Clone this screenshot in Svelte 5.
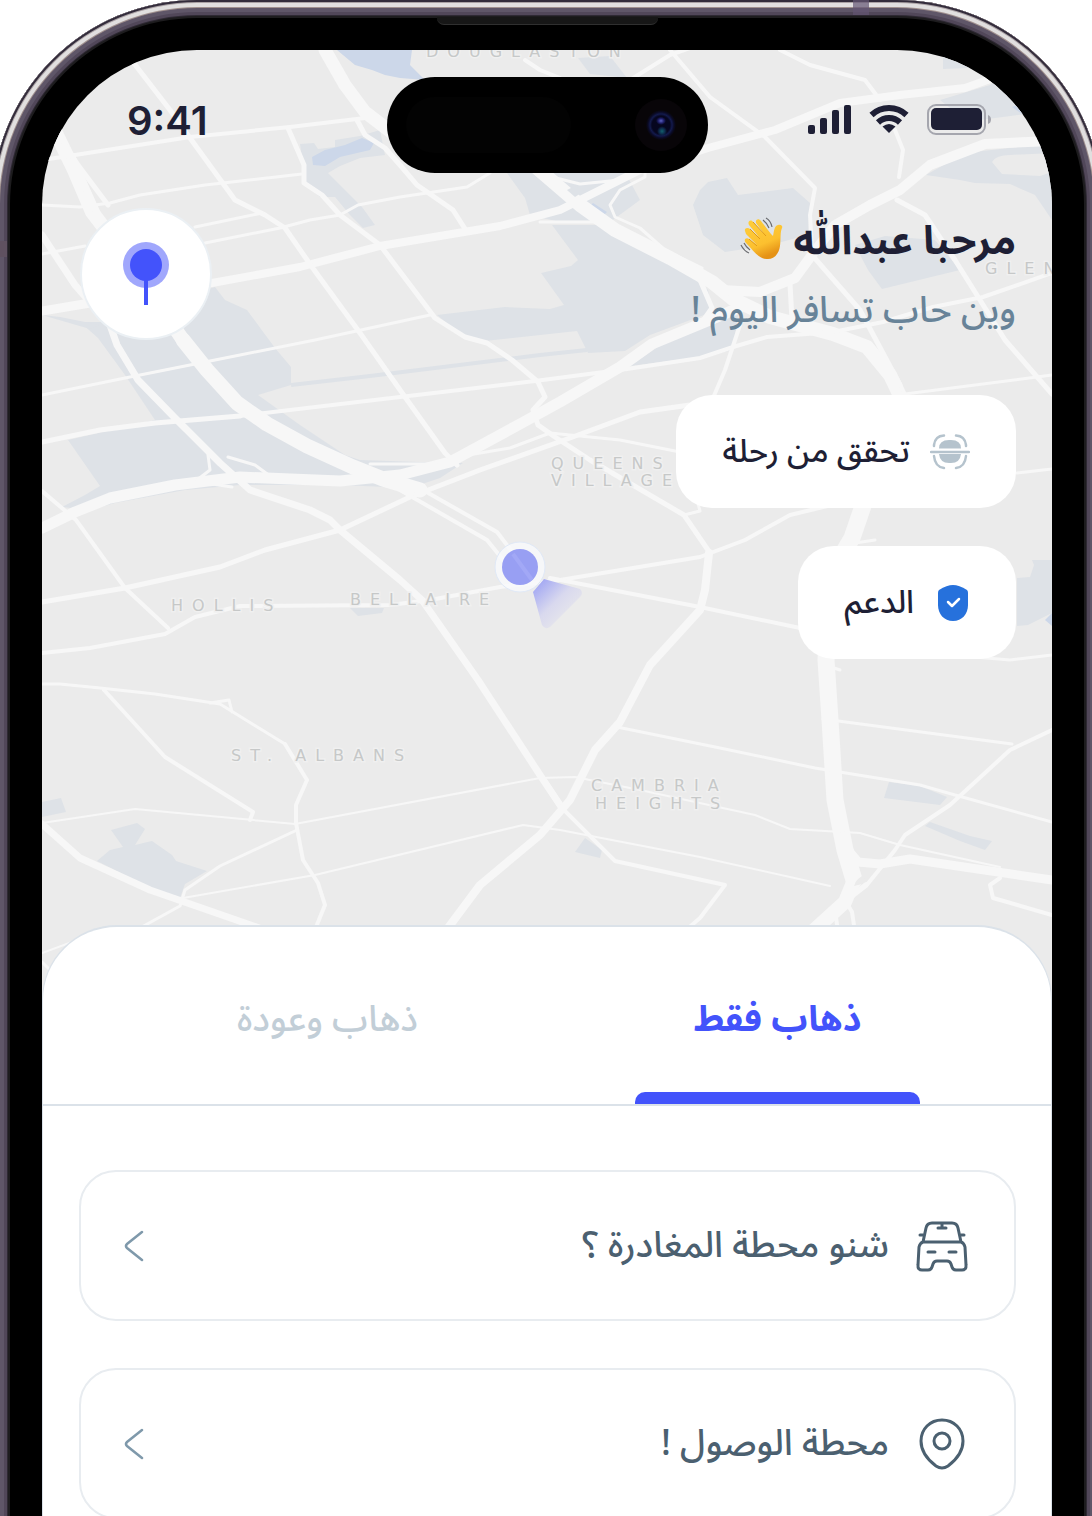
<script>
  const parks = [
    'M80 322 100 322 205 290 215 287 225 300 247 310 275 348 291 367 291 385 258 395 300 425 345 455 360 460 420 462 463 463 440 478 410 488 340 485 240 485 185 490 115 503 90 510 62 507 85 495 100 486 68 440 155 420 125 375 98 338Z',
    'M42 315 60 317 100 325 90 329Z',
    'M552 225 578 260 571 266 541 273 564 305 550 309 505 307 437 315 465 338 485 341 577 331 588 353 625 351 650 335 712 312 708 290 690 275 600 225Z',
    'M630 366 665 342 738 315 733 350 700 357Z',
    'M507 173 525 198 530 215 560 222 610 222 640 200 625 172Z',
    'M693 205 700 190 708 182 727 178 738 195 793 188 810 203 808 235 770 245 725 252 703 235Z',
    'M855 245 885 236 935 240 960 270 882 289 868 270Z',
    'M926 175 965 153 1052 143 1052 220 1035 195 1010 184 975 183 960 180Z',
    'M943 55 975 62 968 68 943 69Z',
    'M940 100 990 85 1000 78 1033 113 980 120 950 108Z',
    'M300 144 314 143 318 149 335 147 335 140 360 136 380 130 385 155 360 158 340 166 328 173 350 195 362 207 375 225 363 228 350 215 335 197 320 197 306 185Z',
    'M97 861 110 850 123 847 111 830 137 823 145 829 135 845 152 841 172 855 176 861 207 871 185 884 180 898 150 888Z',
    'M42 802 61 798 66 812 42 817Z',
    'M889 782 920 786 947 797 940 805 884 798Z',
    'M930 822 970 836 992 841 985 850 960 841 925 826Z',
    'M585 838 602 850 600 858 575 852Z',
    'M1017 578 1030 577 1034 565 1032 560 1052 560 1052 613 1028 625 1017 626Z',
    'M350 608 384 608 382 613 358 616Z',
    'M578 58 610 56 627 78 590 74Z',
  ];

  const water = [
    'M337 50 412 50 410 65 425 80 400 78 385 75 372 70 355 65Z',
    'M312 157 325 150 345 145 362 138 374 143 370 150 340 157 325 166 313 165Z',
    'M593 203 607 212 602 217 588 208Z',
    'M1012 107 1020 104 1032 112 1022 114Z',
    'M1045 620 1052 613 1052 626Z',
  ];

  const land = ['M992 162Q996 155 1010 155L1052 153 1052 172 1040 176 1002 174Z'];

  const roads = [
    { w: 14, d: 'M53 127 74 170 92 212 115 242 150 292 183 340' },
    { w: 7, d: 'M56 133 80 175 98 215' },
    { w: 15, d: 'M183 340 207 370 237 403 267 424 307 446 353 467 383 479 420 490' },
    { w: 7, d: 'M42 235 75 285 110 325 117 345 138 380 175 418 220 463 250 490 310 510 330 520 340 530 400 580 422 600 478 680 540 775 562 808' },
    { w: 4, d: 'M562 808 615 861 725 885 700 918 686 930' },
    { w: 11, d: 'M42 528 75 512 110 498 175 485 240 477 340 481 400 475 450 462 520 424 560 402 620 367 652 344 710 320 745 305' },
    { w: 14, d: 'M530 162 580 205 615 230 670 258 712 282 733 299 770 317 833 334 867 347 890 375 902 400' },
    { w: 17, d: 'M902 400 865 500 852 538 830 575 826 660 830 720 835 800 845 850 854 880' },
    { w: 14, d: 'M854 880 845 902 812 932' },
    { w: 10, d: 'M1052 141 985 144 930 165 900 190 870 205 835 225 814 252 795 278 760 292 720 290' },
    { w: 8, d: 'M1010 72 965 88 900 95 840 103 775 130 708 148 640 170 600 190 560 210 500 226 380 246 300 267 212 283' },
    { w: 9, d: 'M90 303 42 311' },
    { w: 13, d: 'M325 50 345 85 365 112 395 135' },
    { w: 5, d: 'M357 120 365 135 385 148 400 165 417 185 453 210 467 232' },
    { w: 4, d: 'M42 160 75 155 190 137 290 127 365 118' },
    { w: 5, d: 'M133 62 170 110 190 138 235 200 265 215 285 228 312 267 360 333 405 397 445 453 457 465' },
    { w: 5, d: 'M288 128 304 165 304 183 322 195 340 215 380 245 435 318 465 337 487 343 512 360 538 382 545 397 533 410 538 425 555 437 590 460 684 515 710 553' },
    { w: 8, d: 'M709 553 705 590 700 610 650 665 620 722 595 750 570 800 540 835 480 885 445 932' },
    { w: 3, d: 'M42 205 80 207 110 203 140 195 205 185 302 174' },
    { w: 5, d: 'M62 140 78 165 108 205' },
    { w: 3, d: 'M42 254 85 246M195 227 262 213M205 243 280 228 310 220 340 215 358 205 400 197 467 187 490 173' },
    { w: 3, d: 'M42 395 130 377 240 355 315 340 430 315' },
    { w: 5, d: 'M42 442 100 430 155 423 240 416' },
    { w: 4, d: 'M240 416 400 397 535 381 627 369 700 358 733 347 767 337 833 332 883 322 933 307 983 297 1052 273' },
    { w: 4, d: 'M740 325 725 370 713 398' },
    { w: 4, d: 'M42 491 76 520 125 588 168 628' },
    { w: 5, d: 'M42 602 125 588 220 567 265 550 340 530 410 497 480 470 570 438 640 412 690 405' },
    { w: 4, d: 'M42 653 90 648 165 634 195 617 240 606 390 605 430 600 500 587 560 580 700 557 745 540 790 515 840 503' },
    { w: 3, d: 'M450 458 510 448 550 433 620 440 680 452' },
    { w: 4, d: 'M400 490 487 540 508 566M423 490 497 532 520 562' },
    { w: 4, d: 'M550 578 700 607 800 628' },
    { w: 4, d: 'M285 744 307 780 296 805 296 823 303 860 318 883 325 905 314 932' },
    { w: 3, d: 'M42 684 60 684 100 688 155 694 220 704 285 744M210 703 229 700 232 712' },
    { w: 4, d: 'M104 690 165 757 253 812 250 820' },
    { w: 2, d: 'M42 823 135 809 295 824 540 778 575 777 640 790 755 815 790 829 860 833 900 845 1000 867' },
    { w: 7, d: 'M42 824 80 858 150 890 265 930' },
    { w: 3, d: 'M140 928 180 906 185 890 220 866 297 830' },
    { w: 2, d: 'M183 898 315 875 523 825 560 830 700 857 830 886M42 953 72 942' },
    { w: 3, d: 'M42 962 52 972M617 727 720 748 815 768 920 785 955 795 1052 822M823 719 1012 744' },
    { w: 4, d: 'M1052 730 1010 750 950 805 905 835 895 850 866 886 835 910 838 932' },
    { w: 4, d: 'M866 884 836 906M845 900 852 912 855 932' },
    { w: 9, d: 'M848 850 858 862 880 864 910 859 1052 880' },
    { w: 4, d: 'M1052 915 993 898 990 885 1000 878' },
    { w: 4, d: 'M780 50 810 65 865 80 880 100M895 130 903 150 899 177' },
    { w: 4, d: 'M670 50 710 97 765 137 815 188 810 215 812 250' },
    { w: 5, d: 'M812 255 860 310 900 385' },
    { w: 5, d: 'M897 200 925 215 955 260 1005 340 1052 394' },
    { w: 3, d: 'M905 394 1052 375M1017 473 1052 469M975 657 1010 660 1052 655' },
    { w: 3, d: 'M540 174 580 184 620 180 645 170 645 177 620 190 610 205 615 217 640 228 665 250 702 268M540 222 600 222' },
    { w: 4, d: 'M630 80 670 55 690 48M525 60 540 70 560 78' },
    { w: 3, d: 'M684 515 700 511 697 500M208 455 210 470 197 480M228 457 255 465 270 476M205 478 212 484 232 487M370 464 430 464 455 458' },
    { w: 5, d: 'M700 280 712 308 700 325M790 284 792 320' },
    { w: 3, d: 'M855 543 875 540M822 664 840 670M824 684 833 680' },
  ];

  const labels = [
    { x: 426, y: 57, t: 'DOUGLASTON' },
    { x: 985, y: 274, t: 'GLEN' },
    { x: 551, y: 469, t: 'QUEENS' },
    { x: 551, y: 486, t: 'VILLAGE' },
    { x: 171, y: 611, t: 'HOLLIS' },
    { x: 350, y: 605, t: 'BELLAIRE' },
    { x: 231, y: 761, t: 'ST. ALBANS' },
    { x: 591, y: 791, t: 'CAMBRIA' },
    { x: 595, y: 809, t: 'HEIGHTS' },
  ];

  let active = $state('one');
</script>

<div class="device">
  <span class="band band-top"></span>
  <span class="band band-side"></span>
  <span class="speaker"></span>

  <main class="screen" dir="rtl">
    <svg class="map" viewBox="42 50 1010 950" preserveAspectRatio="xMidYMin slice" aria-hidden="true">
      <defs>
        <linearGradient id="beam" x1="536" y1="585" x2="566" y2="616" gradientUnits="userSpaceOnUse">
          <stop offset="0" stop-color="#a3a8f3" />
          <stop offset="0.6" stop-color="#d9d9ee" />
          <stop offset="1" stop-color="#e4e4ec" />
        </linearGradient>
      </defs>
      {#each parks as d}<path {d} fill="#dee2e7" />{/each}
      {#each land as d}<path {d} fill="#ebebeb" />{/each}
      {#each water as d}<path {d} fill="#ccd7e9" />{/each}
      <path d="M291 385 370 376 540 355 587 350" fill="none" stroke="#dee2e7" stroke-width="4" />
      {#each roads as r}
        <path d={r.d} fill="none" stroke="#f7f7f7" stroke-width={r.w} stroke-linejoin="round" stroke-linecap="round" />
      {/each}
      <path d="M567 190 575 186 584 191 575 197Z" fill="#dee2e7" />
      <path d="M854 886Q856 878 866 874L862 884Z" fill="#ebebeb" />
      {#each labels as l}<text class="place" x={l.x} y={l.y}>{l.t}</text>{/each}
      <path d="M544 579 580 589Q584 593 580 597L550 627Q545 630 542 625L533 592Z" fill="url(#beam)" />
      <circle cx="520" cy="567" r="25" fill="#f8f9fb" fill-opacity="0.85" stroke="#e0e9f7" stroke-width="1" />
      <circle cx="520" cy="567" r="18" fill="#989ff3" />
      <path d="M513 554 532 580" stroke="#a2a8f6" stroke-width="4" />
    </svg>

    <div class="status" dir="ltr">
      <time>9:41</time>
      <div class="indicators">
        <svg width="43" height="30" viewBox="0 0 43 30" fill="#1e1f35" aria-hidden="true">
          <rect x="0" y="20" width="7" height="9" rx="2" />
          <rect x="12" y="13" width="7" height="16" rx="2" />
          <rect x="24" y="5" width="7" height="24" rx="2" />
          <rect x="36" y="0" width="7" height="29" rx="2" />
        </svg>
        <svg width="40" height="29" viewBox="0 0 40 29" aria-hidden="true">
          <path d="M2.500 10A25.500 25.500 0 0 1 37.500 10" fill="none" stroke="#1e1f35" stroke-width="6" />
          <path d="M9 17.500A16 16 0 0 1 31 17.500" fill="none" stroke="#1e1f35" stroke-width="6" />
          <path d="M20 28 13.500 21.500Q20 16.500 26.500 21.500Z" fill="#1e1f35" />
        </svg>
        <svg width="65" height="31" viewBox="0 0 65 31" aria-hidden="true">
          <rect x="1" y="1" width="57" height="29" rx="8" fill="none" stroke="#a5a6ae" stroke-width="2" />
          <rect x="4" y="4" width="51" height="22" rx="5" fill="#1e1f35" />
          <path d="M61 11Q64 12 64 15.500T61 20Z" fill="#a5a6ae" />
        </svg>
      </div>
    </div>

    <section class="hero">
      <div class="intro">
        <div class="greeting">
          <h1>
            مرحبا عبداللّٰه
            <svg width="45" height="44" viewBox="0 0 45 44" role="img" aria-label="👋">
              <defs>
                <linearGradient id="skin" x1="0" y1="0" x2="0.4" y2="1">
                  <stop offset="0" stop-color="#ffcf3d" />
                  <stop offset="0.7" stop-color="#fcc02f" />
                  <stop offset="1" stop-color="#e59216" />
                </linearGradient>
              </defs>
              <path d="M5 14C4 11 8 10 10 12L19 20 9 8C7 4 11 2 13 5L24 17 16 6C15 2 19 1 21 4L31 17 33 19C34 15 34 9 38 8 41 7 43 9 42 11 40 15 41 22 40 29 39 37 34 42 28 42 21 43 16 37 6 26 3 23 6 20 9 22L17 28 6 17Z" fill="url(#skin)" />
              <path d="M10 12 20 22M13 5 26 19M9 22 17 29" fill="none" stroke="#e09a1c" stroke-width="1" />
              <path d="M26 1Q31 4 32 10M23 3Q27 6 29 11M1 28Q4 34 9 36M4 26Q6 30 10 33" fill="none" stroke="#6b6c70" stroke-width="1.200" />
            </svg>
          </h1>
          <p>وين حاب تسافر اليوم !</p>
        </div>
        <button class="locate" aria-label="الموقع">
          <svg width="46" height="64" viewBox="0 0 46 64" aria-hidden="true">
            <circle cx="23" cy="23" r="23" fill="#a0a7fc" />
            <circle cx="23" cy="23" r="16" fill="#4353fb" />
            <path d="M23 30V63" stroke="#4353fb" stroke-width="4" />
          </svg>
        </button>
      </div>

      <button class="chip">
        <svg width="40" height="36" viewBox="0 0 40 36" aria-hidden="true">
          <path d="M4 12V11Q5 2 14 1.500M26 1.500Q35 2 36 11V12M4 22Q5 33 14 34M26 34Q35 33 36 22" fill="none" stroke="#b5c3cd" stroke-width="2.500" stroke-linecap="round" />
          <path d="M9 14.500Q9 6 19 6H21Q31 6 31 14.500Z" fill="#b5c3cd" />
          <path d="M9 20Q10 29 19 29H21Q30 29 31 20Z" fill="#b5c3cd" />
          <path d="M1 18H39" stroke="#b5c3cd" stroke-width="2.500" stroke-linecap="round" />
        </svg>
        <span>تحقق من رحلة</span>
      </button>
      <button class="chip">
        <svg class="shield" width="30" height="36" viewBox="0 0 30 36" aria-hidden="true">
          <path d="M15 0Q21 0 29 5Q30 6 30 8V20C30 29 24 36 15 36S0 29 0 20V8Q0 6 1 5Q9 0 15 0Z" fill="#2671dc" />
          <path d="M10 17 14 21 21 14" fill="none" stroke="#fff" stroke-width="2.500" stroke-linecap="round" stroke-linejoin="round" />
        </svg>
        <span>الدعم</span>
      </button>
    </section>

    <section class="sheet">
      <div class="tabs" role="tablist">
        <button role="tab" aria-selected={active === 'one'} class:active={active === 'one'} onclick={() => (active = 'one')}>ذهاب فقط</button>
        <button role="tab" aria-selected={active === 'two'} class:active={active === 'two'} onclick={() => (active = 'two')}>ذهاب وعودة</button>
      </div>
      <div class="cards">
        <button class="card">
          <svg width="52" height="52" viewBox="0 0 52 52" fill="none" stroke="#4b6070" stroke-width="3" stroke-linecap="round" stroke-linejoin="round" aria-hidden="true">
            <path d="M7 22 10 8Q11 3 16 3H36Q41 3 42 8L45 22ZM7 22Q4 23 3 27L2 45Q1.500 50 6 50H12Q15 50 16 47L17 44Q18 41 21 41H31Q34 41 35 44L36 47Q37 50 40 50H46Q50.500 50 50 45L49 27Q48 23 45 22" />
            <path d="M22 8H30M26 4V8M4 15H7M45 15H48M12 32H19M33 32H40" />
          </svg>
          <span>شنو محطة المغادرة ؟</span>
          <svg class="chevron" width="20" height="34" viewBox="0 0 20 34" aria-hidden="true"><path d="M18 3 3 15Q1 17 3 19L18 31" /></svg>
        </button>
        <button class="card">
          <svg width="52" height="52" viewBox="0 0 52 52" fill="none" stroke="#4b6070" stroke-width="3" aria-hidden="true">
            <path d="M26 2C14 2 5 11 5 23 5 34 12 42 20 48Q26 52 32 48C40 42 47 34 47 23 47 11 38 2 26 2Z" />
            <circle cx="26" cy="23" r="8" />
          </svg>
          <span>محطة الوصول !</span>
          <svg class="chevron" width="20" height="34" viewBox="0 0 20 34" aria-hidden="true"><path d="M18 3 3 15Q1 17 3 19L18 31" /></svg>
        </button>
      </div>
    </section>
  </main>

  <div class="island">
    <span class="sensor"></span>
    <span class="camera"></span>
  </div>
</div>

<style>
  :global(body) {
    height: 100vh;
    margin: 0;
    background: #fff;
    overflow: hidden;
  }
  * {
    box-sizing: border-box;
  }
  button {
    border: 0;
    margin: 0;
    padding: 0;
    background: none;
    font: inherit;
    color: inherit;
    cursor: pointer;
  }
  .device {
    position: relative;
    display: flex;
    height: calc(100vh + 20px);
    margin: 0 -10px 0 -8px;
    padding: 50px 50px 0;
    overflow: hidden;
    border-radius: 205px 205px 0 0;
    background: #000;
    box-shadow:
      inset 0 0 0 2px #332c3b,
      inset 0 0 0 3px #aaa2a5,
      inset 0 0 0 7px #e1dfdf,
      inset 0 0 0 8px #a1918f,
      inset 0 0 0 12px #5f5668,
      inset 0 0 0 15px #514759,
      inset 0 0 0 16px #2e2933,
      inset 0 0 0 18px #1d1c1e;
    font-family: "Noto Sans Arabic", "DejaVu Sans", sans-serif;
    font-weight: 500;
  }
  .band {
    position: absolute;
    background: rgb(100 85 115 / 70%);
  }
  .band-top {
    top: 0;
    right: 233px;
    width: 16px;
    height: 15px;
  }
  .band-side {
    top: 241px;
    left: 8px;
    width: 7px;
    height: 16px;
    background: #5f5160;
  }
  .speaker {
    position: absolute;
    top: 17px;
    left: 50%;
    width: 221px;
    height: 8px;
    margin-left: -110px;
    border-bottom: 1px solid #303030;
    border-radius: 0 0 7px 7px;
    background: #171717;
  }
  .island {
    position: absolute;
    top: 77px;
    left: 50%;
    display: flex;
    align-items: center;
    justify-content: space-between;
    width: 321px;
    height: 96px;
    margin-left: -160px;
    padding: 0 21px 0 19px;
    border-radius: 48px;
    background: #000;
  }
  .sensor {
    width: 165px;
    height: 56px;
    border-radius: 28px;
    background: #030303;
  }
  .camera {
    width: 52px;
    height: 52px;
    border-radius: 50%;
    background:
      radial-gradient(5px 4px at 50% 42%, #5b60c0 0, #1d1d66 60%, transparent),
      radial-gradient(5px 5px at 52% 62%, #12606c 0, #0d2a4a 60%, transparent),
      radial-gradient(circle, #06061f 0 9px, #131a4c 11px, #0a0a24 13px, #080508 15px);
  }
  .screen {
    position: relative;
    flex: 1;
    min-width: 0;
    overflow: hidden;
    border-radius: 155px 155px 0 0;
    background: #ebebeb;
    color: #1e1f35;
  }
  .map {
    position: absolute;
    top: 0;
    left: 0;
    width: 100%;
    height: 950px;
  }
  .place {
    direction: ltr;
    fill: #c6c8c8;
    stroke: #f0f0f0;
    stroke-width: 3px;
    paint-order: stroke;
    font-family: "DejaVu Sans", sans-serif;
    font-size: 16px;
    letter-spacing: 9px;
  }
  .status,
  .hero,
  .sheet {
    position: relative;
  }
  .status {
    display: flex;
    align-items: center;
    justify-content: space-between;
    height: 142px;
    padding: 0 60px 0 85px;
  }
  .status time {
    font: 600 40px/48px Inter, sans-serif;
  }
  .indicators {
    display: flex;
    align-items: center;
    gap: 18px;
    padding-bottom: 3px;
  }
  .hero {
    display: flex;
    flex-direction: column;
    align-items: flex-start;
    gap: 38px;
    padding: 16px 36px 266px 38px;
  }
  .intro {
    display: flex;
    justify-content: space-between;
    align-items: flex-start;
    width: 100%;
    height: 149px;
  }
  h1,
  p {
    margin: 0;
    white-space: nowrap;
  }
  h1 {
    display: flex;
    align-items: center;
    gap: 8px;
    font-size: 40px;
    font-weight: 700;
    line-height: 68px;
  }
  h1 svg {
    margin-bottom: 6px;
  }
  p {
    color: #688398;
    font-size: 36px;
    line-height: 70px;
  }
  .locate {
    display: grid;
    place-items: center;
    flex: none;
    width: 132px;
    height: 132px;
    border: 2px solid #ebf0f4;
    border-radius: 50%;
    background: #fff;
  }
  .chip {
    display: flex;
    align-items: center;
    gap: 20px;
    height: 113px;
    padding: 0 46px;
    border-radius: 36px;
    background: #fff;
    font-size: 32px;
    white-space: nowrap;
  }
  .chip .shield {
    margin: 0 2px 0 4px;
  }
  .sheet {
    min-height: 620px;
    border: 2px solid #dbe2e9;
    border-width: 2px 1px 0;
    border-radius: 75px 75px 0 0;
    background: #fff;
  }
  .tabs {
    display: flex;
    justify-content: space-between;
    height: 179px;
    padding: 0 131px 0 142px;
    border-bottom: 2px solid #dbe2e9;
  }
  .tabs button {
    position: relative;
    width: 285px;
    padding-top: 8px;
    color: #c2ced7;
    font-size: 36px;
  }
  .tabs .active {
    color: #4353fb;
    font-weight: 700;
  }
  .tabs .active::after {
    content: "";
    position: absolute;
    inset: auto 0 0;
    height: 12px;
    border-radius: 10px 10px 0 0;
    background: #4353fb;
  }
  .cards {
    display: flex;
    flex-direction: column;
    gap: 47px;
    padding: 64px 35px 0 36px;
  }
  .card {
    display: flex;
    align-items: center;
    gap: 27px;
    height: 151px;
    padding: 0 46px 0 43px;
    border: 2px solid #e8ecf0;
    border-radius: 37px;
    color: #4b6070;
    font-size: 36px;
    white-space: nowrap;
  }
  .chevron {
    margin-inline-start: auto;
    fill: none;
    stroke: #7f99ab;
    stroke-width: 2.500px;
    stroke-linecap: round;
  }
</style>
